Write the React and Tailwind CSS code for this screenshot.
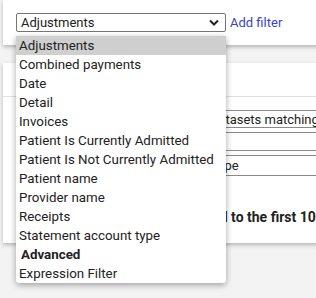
import React from "react";

const items = [
  { label: "Adjustments", active: true },
  { label: "Combined payments" },
  { label: "Date" },
  { label: "Detail" },
  { label: "Invoices" },
  { label: "Patient Is Currently Admitted" },
  { label: "Patient Is Not Currently Admitted" },
  { label: "Patient name" },
  { label: "Provider name" },
  { label: "Receipts" },
  { label: "Statement account type" },
  { label: "Advanced", group: true },
  { label: "Expression Filter" },
];

export default function App() {
  return (
    <div
      className="relative w-[316px] h-[298px] overflow-hidden bg-[#f3f3f3] pl-[3px]"
      style={{ fontFamily: "Roboto, 'Liberation Sans', sans-serif" }}
    >
      {/* top card */}
      <div className="w-[400px] h-[45px] bg-white shadow-[0_2px_4px_rgba(0,0,0,0.25)] pt-[13px] pl-[13px] flex items-start">
        <div className="w-[210px] h-[19px] border border-[#767676] rounded-[2px] bg-white flex items-center justify-between pl-[4px] pr-[6px] text-[13px] leading-none text-[#222]">
          <span>Adjustments</span>
          <svg width="10" height="7" viewBox="0 0 10 7">
            <polyline points="1,1.5 5,5.5 9,1.5" fill="none" stroke="#222" strokeWidth="2" />
          </svg>
        </div>
        <a className="ml-[4px] text-[13px] leading-[19px] text-[#3a44c6]">Add filter</a>
      </div>

      {/* second card */}
      <div className="mt-[18px] w-[400px] h-[180px] bg-white shadow-[0_2px_4px_rgba(0,0,0,0.25)] flex flex-col">
        <div className="h-[34px] border-b border-[#e2e2e2]" />
        <div className="flex flex-col pt-[13px] text-[13px] text-[#222]">
          <div className="ml-[203px] h-[18px] border border-[#8a8a8a] flex items-center pl-[4px] leading-none whitespace-nowrap">
            datasets matching
          </div>
          <div className="mt-[4px] ml-[205px] h-[19px] border border-[#8a8a8a]" />
          <div className="mt-[4px] ml-[206px] h-[21px] border border-[#8a8a8a] flex items-center pl-[4px] leading-none">
            type
          </div>
          <div className="mt-[34px] ml-[107px] text-[14px] font-bold leading-none whitespace-nowrap">
            Results are limited to the first 1000 rows
          </div>
        </div>
      </div>

      {/* open dropdown */}
      <div className="absolute left-[16px] top-[36px] w-[210px] bg-white rounded-b-[3px] shadow-[0_2px_6px_rgba(0,0,0,0.35)] text-[13.33px] text-[#222]">
        {items.map((it) => (
          <div
            key={it.label}
            className={
              "h-[19px] flex items-center leading-none whitespace-nowrap " +
              (it.active ? "bg-[#cfcfcf] " : "") +
              (it.group ? "font-bold pl-[5px]" : "pl-[3px]")
            }
          >
            {it.label}
          </div>
        ))}
      </div>
    </div>
  );
}
